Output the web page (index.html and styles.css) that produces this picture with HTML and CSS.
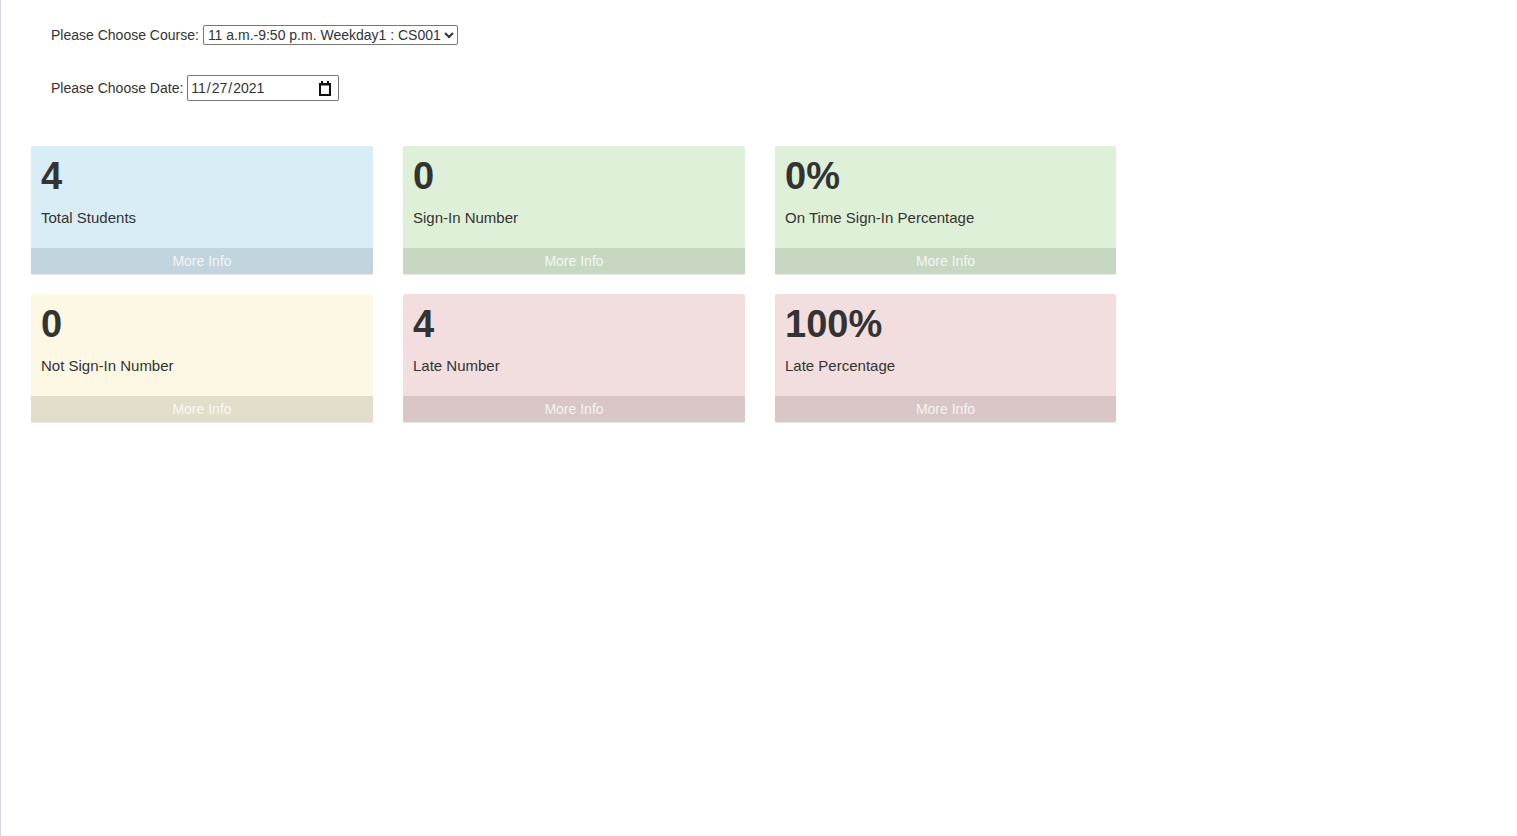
FILE: index.html
```html
<!DOCTYPE html>
<html>
<head>
<meta charset="utf-8">
<link rel="stylesheet" href="styles.css">
</head>
<body>
<div class="wrapper">
  <section class="content">
    <div class="filters">
      <div class="field field-course">
        <label for="course">Please Choose Course:</label>
        <select id="course" class="course-select">
          <option>11 a.m.-9:50 p.m. Weekday1 : CS001</option>
        </select>
      </div>
      <div class="field field-date">
        <label for="date">Please Choose Date:</label>
        <input id="date" class="date-input" type="date" value="2021-11-27">
      </div>
    </div>
    <div class="boxes">
      <div class="small-box bg-info">
        <div class="inner"><h3>4</h3><p>Total Students</p></div>
        <a class="small-box-footer" href="#">More Info</a>
      </div>
      <div class="small-box bg-success">
        <div class="inner"><h3>0</h3><p>Sign-In Number</p></div>
        <a class="small-box-footer" href="#">More Info</a>
      </div>
      <div class="small-box bg-success">
        <div class="inner"><h3>0%</h3><p>On Time Sign-In Percentage</p></div>
        <a class="small-box-footer" href="#">More Info</a>
      </div>
      <div class="small-box bg-warning">
        <div class="inner"><h3>0</h3><p>Not Sign-In Number</p></div>
        <a class="small-box-footer" href="#">More Info</a>
      </div>
      <div class="small-box bg-danger">
        <div class="inner"><h3>4</h3><p>Late Number</p></div>
        <a class="small-box-footer" href="#">More Info</a>
      </div>
      <div class="small-box bg-danger">
        <div class="inner"><h3>100%</h3><p>Late Percentage</p></div>
        <a class="small-box-footer" href="#">More Info</a>
      </div>
    </div>
  </section>
</div>
</body>
</html>
```

FILE: styles.css
```css
html, body {
  margin: 0;
  padding: 0;
  background: #fff;
}
body {
  font-family: "Liberation Sans", Arial, sans-serif;
  font-size: 14px;
  color: #333;
}
.wrapper {
  min-height: 836px;
  border-left: 1px solid #d2d6de;
  box-sizing: border-box;
}
.content {
  padding: 15px 30px;
}
.filters {
  padding-left: 20px;
  padding-top: 10px;
}
.field {
  display: flex;
  align-items: center;
}
.field label {
  margin-right: 4px;
}
.field-course {
  height: 20px;
}
.field-date {
  margin-top: 30px;
  height: 26px;
}
.course-select {
  width: 255px;
  height: 20px;
  font-family: "Liberation Sans", Arial, sans-serif;
  font-size: 14px;
  color: #333;
  border: 1px solid #767676;
  border-radius: 2px;
  background: #fff;
  padding: 0;
  margin: 0;
}
.date-input {
  width: 152px;
  height: 26px;
  box-sizing: border-box;
  font-family: "Liberation Sans", Arial, sans-serif;
  font-size: 14px;
  color: #333;
  border: 1px solid #767676;
  border-radius: 2px;
  padding: 0 7px 0 2px;
  margin: 0;
}
.date-input::-webkit-calendar-picker-indicator {
  width: 12px;
  height: 15px;
  padding: 0;
  margin: 0;
  background-image: url("data:image/svg+xml;utf8,<svg xmlns='http://www.w3.org/2000/svg' width='12' height='15' viewBox='0 0 12 15'><rect x='2' y='0' width='2' height='3' fill='%23111'/><rect x='8' y='0' width='2' height='3' fill='%23111'/><rect x='1' y='3' width='10' height='11' fill='none' stroke='%23111' stroke-width='2'/><rect x='1' y='3' width='10' height='1.5' fill='%23111'/></svg>");
  background-size: 12px 15px;
  background-repeat: no-repeat;
  background-position: center;
}
.boxes {
  margin-top: 45px;
  display: grid;
  grid-template-columns: 342px 342px 341px;
  column-gap: 30px;
  row-gap: 20px;
}
.small-box {
  border-radius: 2px;
  box-shadow: 0 1px 1px rgba(0,0,0,0.1);
  display: flex;
  flex-direction: column;
}
.small-box .inner {
  padding: 10px;
}
.small-box h3 {
  font-size: 38px;
  font-weight: bold;
  margin: 0 0 10px 0;
  padding: 0;
  line-height: 41px;
  white-space: nowrap;
  color: #333;
}
.small-box p {
  font-size: 15px;
  line-height: 21px;
  margin: 0 0 10px 0;
}
.small-box-footer {
  display: block;
  text-align: center;
  padding: 3px 0;
  line-height: 20px;
  color: rgba(255,255,255,0.8);
  background: rgba(0,0,0,0.1);
  text-decoration: none;
  font-size: 14px;
}
.bg-info { background-color: #d9edf7; }
.bg-success { background-color: #dff0d8; }
.bg-warning { background-color: #fcf8e3; }
.bg-danger { background-color: #f2dede; }
```
